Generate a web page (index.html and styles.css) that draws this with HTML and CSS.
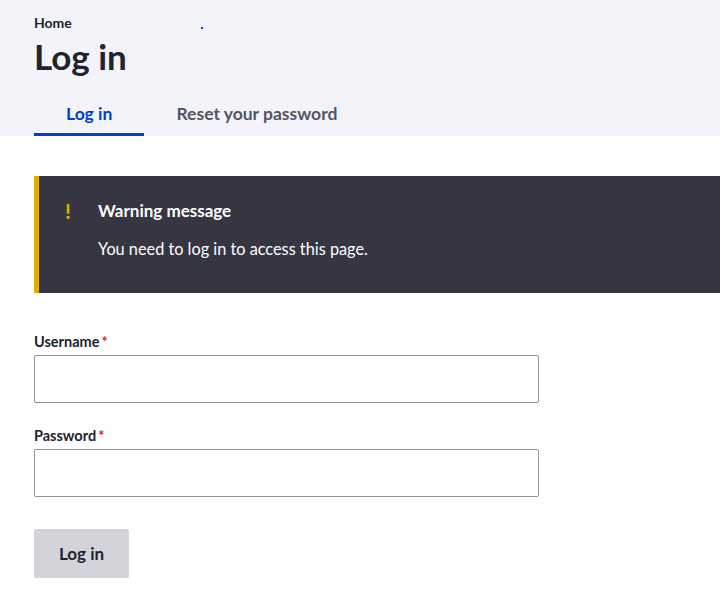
FILE: index.html
```html
<!DOCTYPE html>
<html lang="en">
<head>
<meta charset="utf-8">
<title>Log in</title>
<link rel="stylesheet" href="styles.css">
</head>
<body>
<header class="page-header">
  <nav class="breadcrumb"><a href="#">Home</a><span class="dot"></span></nav>
  <h1 class="title">Log in</h1>
  <ul class="tabs">
    <li class="tab active"><a href="#">Log in</a></li>
    <li class="tab"><a href="#">Reset your password</a></li>
  </ul>
</header>
<main class="content">
  <div class="messages warning">
    <div class="msg-icon">!</div>
    <div class="msg-body">
      <h2 class="msg-title">Warning message</h2>
      <p class="msg-text">You need to log in to access this page.</p>
    </div>
  </div>
  <form class="login-form">
    <div class="form-item">
      <label class="label">Username<span class="req">*</span></label>
      <input class="input" type="text">
    </div>
    <div class="form-item">
      <label class="label">Password<span class="req">*</span></label>
      <input class="input" type="password">
    </div>
    <button class="button" type="button">Log in</button>
  </form>
</main>
</body>
</html>
```
FILE: styles.css
```css
* { box-sizing: border-box; }
html, body { margin: 0; padding: 0; }
body {
  font-family: Lato, "Noto Sans", sans-serif;
  color: #222330;
  background: #fff;
  overflow: hidden;
}
.page-header {
  background: #f3f4f9;
  padding: 14px 34px 0;
  height: 136px;
  display: flex;
  flex-direction: column;
}
.breadcrumb {
  position: relative;
  font-size: 14px;
  font-weight: 700;
  line-height: 18px;
}
.breadcrumb a { color: #222330; text-decoration: none; }
.dot {
  position: absolute;
  left: 167px;
  top: 13px;
  width: 2px;
  height: 2px;
  background: #1a1aff;
}
.title {
  margin: 4px 0 0;
  font-size: 35px;
  font-weight: 700;
  line-height: 40px;
  color: #222330;
}
.tabs {
  list-style: none;
  margin: auto 0 0;
  padding: 0;
  display: flex;
}
.tab a {
  display: block;
  padding: 0 32px;
  height: 40px;
  line-height: 36px;
  font-size: 17.5px;
  font-weight: 700;
  color: #545560;
  text-decoration: none;
  border-bottom: 3px solid transparent;
}
.tab.active a {
  color: #003ecc;
  border-bottom-color: #003ecc;
}
.content {
  padding: 40px 0 0 34px;
}
.messages {
  display: flex;
  background: #353641;
  border-left: 5px solid #e0ac00;
  color: #fff;
  padding: 25px 24px 29px 26px;
  min-height: 117px;
}
.msg-icon {
  width: 33px;
  color: #e0ac00;
  font-weight: 700;
  font-size: 21px;
  line-height: 20px;
}
.msg-title {
  margin: 0;
  font-size: 17px;
  font-weight: 700;
  line-height: 20px;
}
.msg-text {
  margin: 18px 0 0;
  font-size: 16.3px;
  line-height: 20px;
}
.login-form {
  padding-top: 40px;
  width: 505px;
}
.form-item { margin-bottom: 24px; }
.label {
  display: block;
  font-size: 14.5px;
  font-weight: 700;
  line-height: 18px;
  margin-bottom: 4px;
}
.req {
  color: #dc2323;
  margin-left: 2px;
}
.input {
  display: block;
  width: 505px;
  height: 48px;
  border: 1px solid #8e929c;
  border-radius: 2px;
  background: #fff;
  font: inherit;
}
.button {
  margin-top: 8px;
  width: 95px;
  height: 49px;
  background: #d3d4d9;
  border: 0;
  border-radius: 2px;
  font-family: inherit;
  font-size: 17px;
  font-weight: 700;
  color: #222330;
  padding: 0;
}
```
